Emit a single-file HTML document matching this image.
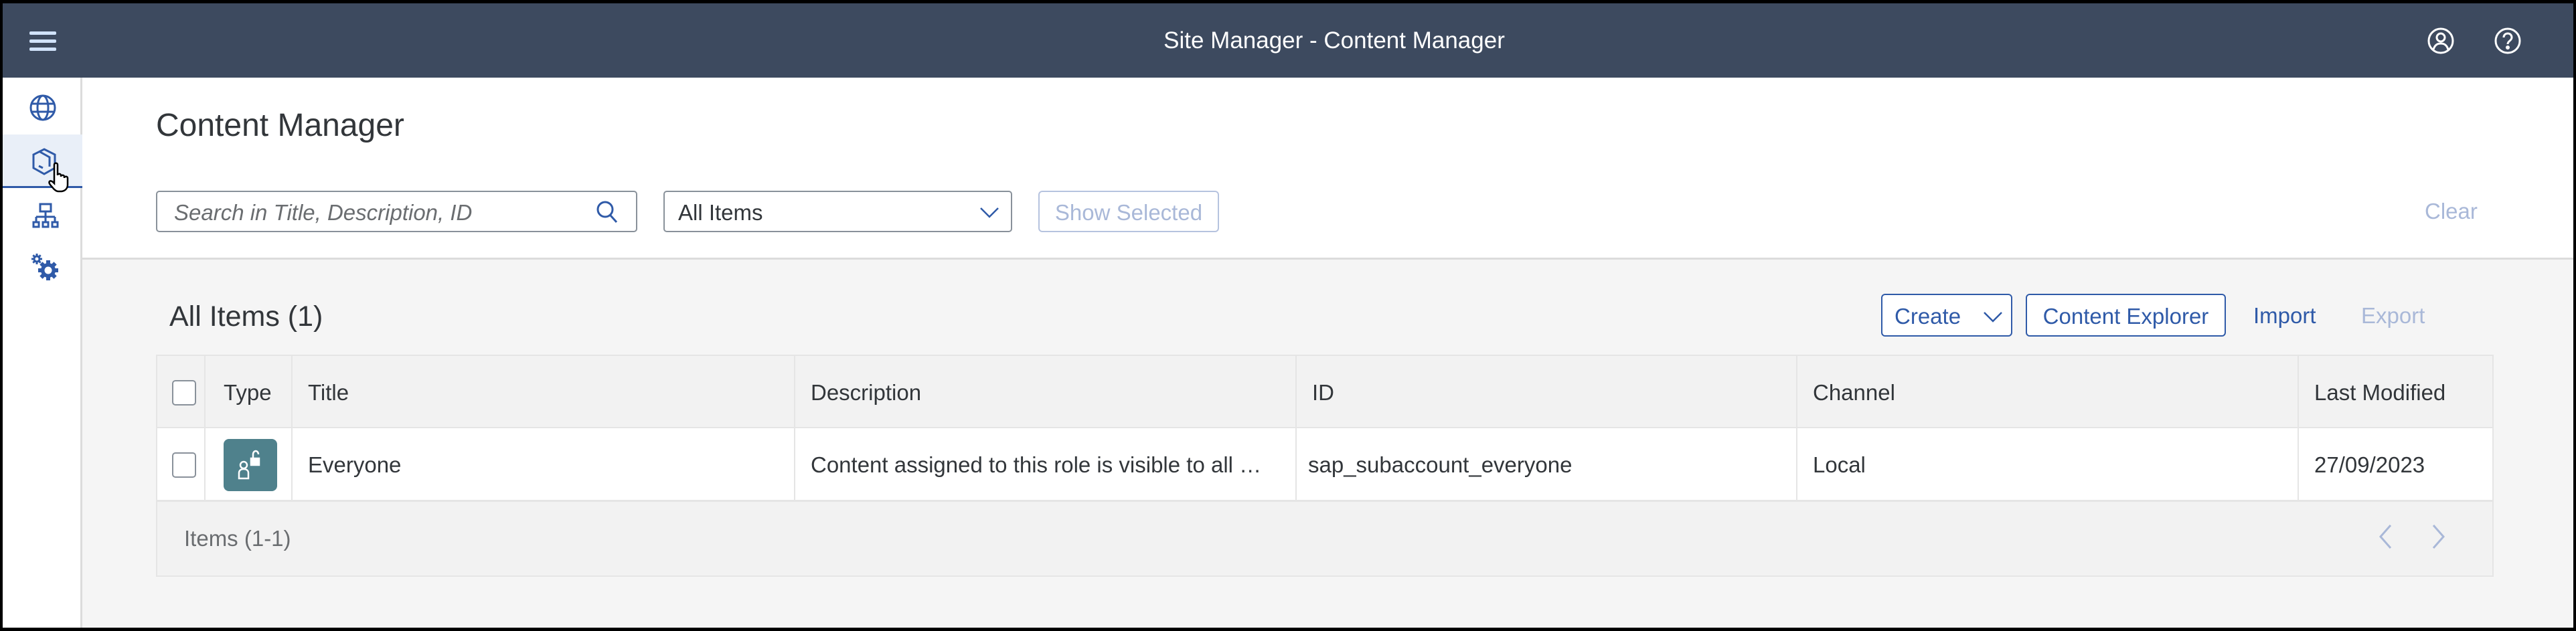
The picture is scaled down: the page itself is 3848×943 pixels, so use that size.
<!DOCTYPE html>
<html><head><meta charset="utf-8"><style>
*{box-sizing:border-box;margin:0;padding:0}
body{width:3848px;height:943px;background:#000;font-family:"Liberation Sans",sans-serif;position:relative;overflow:hidden;color:#32363a}
.a{position:absolute}
#frame{left:4px;top:5px;width:3840px;height:933px;background:#f5f5f5;overflow:hidden}
#hdr{left:0;top:0;width:3840px;height:111px;background:#3d4a5f}
#side{left:0;top:111px;width:119px;height:822px;background:#fff;border-right:3px solid #dcdcdc}
#top{left:119px;top:111px;width:3721px;height:272px;background:#fff;border-bottom:3px solid #dcdcdc}
.t{font-size:33px;white-space:nowrap}
.cell{position:absolute;border-right:2px solid #e5e5e5;height:100%;top:0}
.cb{position:absolute;width:36px;height:38px;border:2px solid #89919a;border-radius:5px;background:#fff}
</style></head><body>
<div id="frame" class="a">
<div id="hdr" class="a">
 <div class="a" style="left:40px;top:42px;width:40px;height:5px;background:#d1e3fb;border-radius:2px"></div>
 <div class="a" style="left:40px;top:54px;width:40px;height:5px;background:#d1e3fb;border-radius:2px"></div>
 <div class="a" style="left:40px;top:66px;width:40px;height:5px;background:#d1e3fb;border-radius:2px"></div>
 <div class="a t" style="left:1489px;width:1000px;text-align:center;top:36px;color:#fff;font-size:35px">Site Manager - Content Manager</div>
 <svg class="a" style="left:3620px;top:34px" width="44" height="44" viewBox="0 0 44 44" fill="none" stroke="#fff" stroke-width="3"><circle cx="22" cy="22" r="18"/><circle cx="22" cy="17" r="6"/><path d="M11 35c2-7 6-9 11-9s9 2 11 9"/></svg>
 <svg class="a" style="left:3720px;top:34px" width="44" height="44" viewBox="0 0 44 44" fill="none" stroke="#fff" stroke-width="3"><circle cx="22" cy="22" r="18"/><path d="M16 17c0-4 3-6 6-6s6 2 6 6c0 5-6 5-6 10"/><circle cx="22" cy="32" r="1.5" fill="#fff"/></svg>
</div>
<div id="side" class="a">
 <svg class="a" style="left:40px;top:25px" width="40" height="40" viewBox="0 0 40 40" fill="none" stroke="#2f5aa8" stroke-width="3"><circle cx="20" cy="20" r="18"/><ellipse cx="20" cy="20" rx="8" ry="18"/><path d="M2 14h36M2 26h36"/></svg>
 <div class="a" style="left:0;top:85px;width:119px;height:80px;background:#e9eff8;border-bottom:3px solid #2f5aa8"></div>
 <svg class="a" style="left:42px;top:104px" width="40" height="44" viewBox="0 0 40 44" fill="none" stroke="#2f5aa8" stroke-width="3"><path d="M20 3l16 8v20l-16 9-16-9V11z"/><path d="M12 6l16 9v14"/><path d="M12 28l6 3"/></svg>
 <svg class="a" style="left:66px;top:126px" width="36" height="46" viewBox="0 0 36 46"><path d="M10 40c-4-5-8-8-6-11 2-2 5 1 7 3V4c0-3 5-3 5 0v16c0-3 5-3 5 0v2c0-3 5-3 5 0v2c0-3 5-3 5 0v10c0 5-3 9-9 10H17c-3 0-5-2-7-4z" fill="#fff" stroke="#000" stroke-width="2.5"/></svg>
 <svg class="a" style="left:44px;top:187px" width="40" height="38" viewBox="0 0 40 38" fill="none" stroke="#2f5aa8" stroke-width="3"><rect x="12" y="2" width="16" height="11"/><path d="M20 13v8M6 21h28M6 21v8M20 21v8M34 21v8"/><rect x="2" y="29" width="8" height="7"/><rect x="16" y="29" width="8" height="7"/><rect x="30" y="29" width="8" height="7"/></svg>
 <svg class="a" style="left:42px;top:262px" width="42" height="42" viewBox="0 0 42 42">
  <g fill="#2f5aa8">
   <g transform="translate(9,9)"><rect x="-1.5" y="-8" width="3" height="16"/><rect x="-1.5" y="-8" width="3" height="16" transform="rotate(45)"/><rect x="-1.5" y="-8" width="3" height="16" transform="rotate(90)"/><rect x="-1.5" y="-8" width="3" height="16" transform="rotate(135)"/><circle r="5.5"/><circle r="2.5" fill="#fff"/></g>
   <g transform="translate(26,26)"><rect x="-3" y="-15" width="6" height="30"/><rect x="-3" y="-15" width="6" height="30" transform="rotate(45)"/><rect x="-3" y="-15" width="6" height="30" transform="rotate(90)"/><rect x="-3" y="-15" width="6" height="30" transform="rotate(135)"/><circle r="11"/><circle r="5.5" fill="#fff"/></g>
  </g>
 </svg>
</div>
<div id="top" class="a">
 <div class="a t" style="left:110px;top:44px;font-size:48px;color:#32363a">Content Manager</div>
 <div class="a" style="left:110px;top:169px;width:719px;height:62px;border:2px solid #89919a;border-radius:5px;background:#fff">
  <div class="a t" style="left:25px;top:12px;font-style:italic;color:#6a6d70">Search in Title, Description, ID</div>
  <svg class="a" style="left:655px;top:12px" width="34" height="36" viewBox="0 0 34 36" fill="none" stroke="#2f5aa8" stroke-width="3"><circle cx="14" cy="14" r="11"/><path d="M22 23l9 10"/></svg>
 </div>
 <div class="a" style="left:868px;top:169px;width:521px;height:62px;border:2px solid #89919a;border-radius:5px;background:#fff">
  <div class="a t" style="left:20px;top:12px">All Items</div>
  <svg class="a" style="left:470px;top:20px" width="30" height="20" viewBox="0 0 30 20" fill="none" stroke="#2f5aa8" stroke-width="2.5"><path d="M2 4l13 13L28 4"/></svg>
 </div>
 <div class="a" style="left:1428px;top:169px;width:270px;height:62px;border:2px solid #b6c3df;border-radius:6px;background:#fff">
  <div class="a t" style="left:0;width:266px;text-align:center;top:12px;color:#a9b8d8">Show Selected</div>
 </div>
 <div class="a t" style="left:3499px;top:181px;color:#a9b8d8">Clear</div>
</div>
<div class="a t" style="left:249px;top:444px;font-size:43px">All Items (1)</div>
<div class="a" style="left:2806px;top:434px;width:196px;height:64px;border:2px solid #2f5aa8;border-radius:6px;background:#fff">
 <div class="a t" style="left:18px;top:13px;color:#2f5aa8">Create</div>
 <svg class="a" style="left:150px;top:22px" width="30" height="20" viewBox="0 0 30 20" fill="none" stroke="#2f5aa8" stroke-width="2.5"><path d="M2 4l13 13L28 4"/></svg>
</div>
<div class="a" style="left:3022px;top:434px;width:299px;height:64px;border:2px solid #2f5aa8;border-radius:6px;background:#fff">
 <div class="a t" style="left:0;width:295px;text-align:center;top:13px;color:#2f5aa8">Content Explorer</div>
</div>
<div class="a t" style="left:3362px;top:448px;color:#2f5aa8">Import</div>
<div class="a t" style="left:3523px;top:448px;color:#a9b8d8">Export</div>
<div class="a" style="left:229px;top:525px;width:3492px;height:332px;border:2px solid #e5e5e5;background:#f2f2f2">
 <div class="a" style="left:0;top:0;width:3488px;height:108px;border-bottom:2px solid #e5e5e5">
  <div class="cell" style="left:0;width:72px"></div>
  <div class="cell" style="left:72px;width:130px"></div>
  <div class="cell" style="left:202px;width:751px"></div>
  <div class="cell" style="left:953px;width:749px"></div>
  <div class="cell" style="left:1702px;width:748px"></div>
  <div class="cell" style="left:2450px;width:749px"></div>
  <div class="cb" style="left:22px;top:36px"></div>
  <div class="a t" style="left:99px;top:36px">Type</div>
  <div class="a t" style="left:225px;top:36px">Title</div>
  <div class="a t" style="left:976px;top:36px">Description</div>
  <div class="a t" style="left:1725px;top:36px">ID</div>
  <div class="a t" style="left:2473px;top:36px">Channel</div>
  <div class="a t" style="left:3222px;top:36px">Last Modified</div>
 </div>
 <div class="a" style="left:0;top:108px;width:3488px;height:110px;background:#fff;border-bottom:3px solid #e5e5e5">
  <div class="cell" style="left:0;width:72px"></div>
  <div class="cell" style="left:72px;width:130px"></div>
  <div class="cell" style="left:202px;width:751px"></div>
  <div class="cell" style="left:953px;width:749px"></div>
  <div class="cell" style="left:1702px;width:748px"></div>
  <div class="cell" style="left:2450px;width:749px"></div>
  <div class="cb" style="left:22px;top:36px"></div>
  <div class="a" style="left:99px;top:16px;width:80px;height:78px;background:#4f818c;border-radius:8px">
   <svg class="a" style="left:20px;top:16px" width="40" height="46" viewBox="0 0 40 46" fill="none" stroke="#fff" stroke-width="2.5"><circle cx="10" cy="23" r="5"/><path d="M3 43v-8c0-4 3-6 7-6s7 2 7 6v8z"/><path d="M24 12V7c0-3 2-5 4-5s4 2 4 5"/><rect x="21" y="13" width="12" height="10" fill="#fff"/></svg>
  </div>
  <div class="a t" style="left:225px;top:36px">Everyone</div>
  <div class="a t" style="left:976px;top:36px">Content assigned to this role is visible to all …</div>
  <div class="a t" style="left:1719px;top:36px">sap_subaccount_everyone</div>
  <div class="a t" style="left:2473px;top:36px">Local</div>
  <div class="a t" style="left:3222px;top:36px">27/09/2023</div>
 </div>
 <div class="a t" style="left:40px;top:254px;color:#6a6d70">Items (1-1)</div>
 <svg class="a" style="left:3316px;top:250px" width="24" height="40" viewBox="0 0 24 40" fill="none" stroke="#a9b8d8" stroke-width="3"><path d="M20 3L5 20l15 17"/></svg>
 <svg class="a" style="left:3396px;top:250px" width="24" height="40" viewBox="0 0 24 40" fill="none" stroke="#a9b8d8" stroke-width="3"><path d="M4 3l15 17L4 37"/></svg>
</div>
</div>
</body></html>
